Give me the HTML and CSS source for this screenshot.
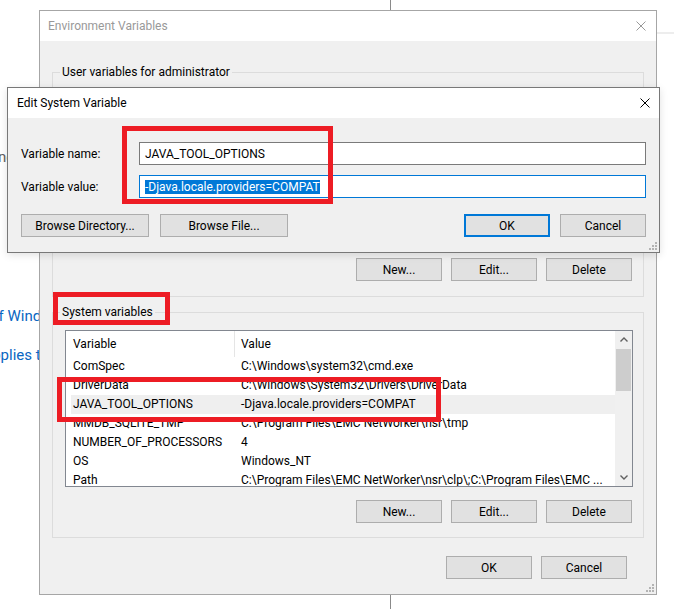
FILE: index.html
```html
<!DOCTYPE html>
<html lang="en">

<head>
    <meta charset="UTF-8">
    <meta name="viewport" content="width=device-width, initial-scale=1.0">
    <title>Environment Variables</title>
    <link rel="stylesheet" href="styles.css">
</head>

<body>

    <div class="desktop">
        <!-- settings page behind the dialogs -->
        <div class="bg-line"></div>
        <div class="bg-rule"></div>
        <span class="bg-text sync">nc</span>
        <span class="bg-text link first">of Windows</span>
        <span class="bg-text link second">applies to</span>

        <div class="window env">
            <div class="titlebar inactive">
                <span>Environment Variables</span>
                <svg class="close" viewBox="0 0 10 10"><path d="M0.5 0.5L9.5 9.5M9.5 0.5L0.5 9.5" /></svg>
            </div>
            <div class="env-body">
                <fieldset class="group user">
                    <legend>User variables for administrator</legend>
                    <div class="listview short">
                        <div class="lv-main">
                            <div class="lv-head">
                                <span>Variable</span>
                                <span class="col-value">Value</span>
                            </div>
                            <div class="lv-row"><span>OneDrive</span><span class="col-value">C:\Users\administrator\OneDrive</span></div>
                            <div class="lv-row"><span>Path</span><span class="col-value">C:\Users\administrator\AppData\Local\Microsoft\WindowsApps;</span></div>
                            <div class="lv-row"><span>TEMP</span><span class="col-value">C:\Users\administrator\AppData\Local\Temp</span></div>
                            <div class="lv-row"><span>TMP</span><span class="col-value">C:\Users\administrator\AppData\Local\Temp</span></div>
                        </div>
                    </div>
                    <div class="btn-row">
                        <button class="btn">New...</button>
                        <button class="btn">Edit...</button>
                        <button class="btn">Delete</button>
                    </div>
                </fieldset>

                <fieldset class="group system">
                    <legend>System variables</legend>
                    <div class="listview">
                        <div class="lv-main">
                            <div class="lv-head">
                                <span>Variable</span>
                                <span class="col-value">Value</span>
                            </div>
                            <div class="lv-row"><span>ComSpec</span><span class="col-value">C:\Windows\system32\cmd.exe</span></div>
                            <div class="lv-row"><span>DriverData</span><span class="col-value">C:\Windows\System32\Drivers\DriverData</span></div>
                            <div class="lv-row selected"><span>JAVA_TOOL_OPTIONS</span><span class="col-value">-Djava.locale.providers=COMPAT</span></div>
                            <div class="lv-row"><span>MMDB_SQLITE_TMP</span><span class="col-value">C:\Program Files\EMC NetWorker\nsr\tmp</span></div>
                            <div class="lv-row"><span>NUMBER_OF_PROCESSORS</span><span class="col-value">4</span></div>
                            <div class="lv-row"><span>OS</span><span class="col-value">Windows_NT</span></div>
                            <div class="lv-row"><span>Path</span><span class="col-value">C:\Program Files\EMC NetWorker\nsr\clp\;C:\Program Files\EMC ...</span></div>
                        </div>
                        <div class="scrollbar">
                            <div class="sb-btn"><svg viewBox="0 0 8 5"><polyline points="0.5,4.5 4,1 7.5,4.5" /></svg></div>
                            <div class="sb-track"><div class="sb-thumb"></div></div>
                            <div class="sb-btn"><svg viewBox="0 0 8 5"><polyline points="0.5,0.5 4,4 7.5,0.5" /></svg></div>
                        </div>
                    </div>
                    <div class="btn-row">
                        <button class="btn">New...</button>
                        <button class="btn">Edit...</button>
                        <button class="btn">Delete</button>
                    </div>
                </fieldset>

                <div class="footer">
                    <button class="btn">OK</button>
                    <button class="btn">Cancel</button>
                </div>
            </div>
            <svg class="grip" viewBox="0 0 8 8"><path d="M6 0h2v2H6zM3 3h2v2H3zM6 3h2v2H6zM0 6h2v2H0zM3 6h2v2H3zM6 6h2v2H6z" /></svg>
        </div>

        <div class="window edit">
            <div class="titlebar">
                <span>Edit System Variable</span>
                <svg class="close" viewBox="0 0 10 10"><path d="M0.5 0.5L9.5 9.5M9.5 0.5L0.5 9.5" /></svg>
            </div>
            <div class="edit-body">
                <div class="fields">
                    <label for="var-name">Variable name:</label>
                    <div class="field" id="var-name">JAVA_TOOL_OPTIONS</div>
                    <label for="var-value">Variable value:</label>
                    <div class="field focus" id="var-value"><span class="sel">-Djava.locale.providers=COMPAT</span></div>
                </div>
                <div class="edit-actions">
                    <button class="btn wide">Browse Directory...</button>
                    <button class="btn wide">Browse File...</button>
                    <span class="spacer"></span>
                    <button class="btn default">OK</button>
                    <button class="btn">Cancel</button>
                </div>
            </div>
            <svg class="grip" viewBox="0 0 8 8"><path d="M6 0h2v2H6zM3 3h2v2H3zM6 3h2v2H6zM0 6h2v2H0zM3 6h2v2H3zM6 6h2v2H6z" /></svg>
        </div>

        <!-- red annotation boxes -->
        <div class="mark mark-fields"></div>
        <div class="mark mark-label"></div>
        <div class="mark mark-row"></div>
    </div>

</body>

</html>
```

FILE: styles.css
```css
* {
    box-sizing: border-box;
}

body {
    margin: 0;
    font-family: "Segoe UI", Roboto, sans-serif;
    font-size: 12px;
    color: #000;
    background: #fff;
}

.desktop {
    position: relative;
    width: 674px;
    height: 609px;
    overflow: hidden;
}

/* things on the settings page behind */
.bg-line {
    position: absolute;
    left: 390px;
    top: 0;
    width: 1px;
    height: 609px;
    background: #8a8a8a;
}

.bg-rule {
    position: absolute;
    left: 656px;
    top: 32px;
    width: 18px;
    height: 2px;
    background: #ededed;
}

.bg-text {
    position: absolute;
    font-size: 15px;
    line-height: 20px;
    white-space: nowrap;
}

.sync {
    left: -2px;
    top: 147px;
    color: #606060;
}

.link {
    color: #0a66c2;
}

.link.first {
    left: -10px;
    top: 306px;
}

.link.second {
    left: -16px;
    top: 345px;
}

/* windows */
.window {
    position: absolute;
    display: flex;
    flex-direction: column;
    background: #f0f0f0;
}

.env {
    left: 39px;
    top: 10px;
    width: 618px;
    height: 585px;
    border: 1px solid #a6a6a6;
}

.edit {
    left: 7px;
    top: 87px;
    width: 653px;
    height: 166px;
    border: 1px solid #787878;
    box-shadow: 0 2px 8px rgba(0, 0, 0, 0.12);
}

.titlebar {
    flex: none;
    height: 30px;
    background: #fff;
    display: flex;
    align-items: center;
    justify-content: space-between;
    padding: 0 10px 0 8px;
}

.titlebar.inactive {
    color: #999;
}

.edit .titlebar {
    padding: 0 9px;
}

.close {
    width: 10px;
    height: 10px;
    fill: none;
    stroke: currentColor;
    stroke-width: 1;
}

.grip {
    position: absolute;
    right: 2px;
    bottom: 2px;
    width: 8px;
    height: 8px;
    fill: #b3b3b3;
}

/* environment variables dialog */
.env-body {
    flex: 1;
    padding: 23px 12px 0;
}

.group {
    margin: 0;
    padding: 0 0 14px;
    border: 1px solid #dcdcdc;
}

.group.user {
    padding-bottom: 15px;
}

.group.system {
    margin-top: 7px;
}

legend {
    margin-left: 7px;
    padding: 0 2px;
    line-height: 16px;
}

.listview {
    display: flex;
    height: 157px;
    margin: 10px 10px 0 12px;
    border: 1px solid #828790;
    background: #fff;
    overflow: hidden;
}

.listview.short {
    height: 155px;
}

.lv-main {
    flex: 1;
    min-width: 0;
    overflow: hidden;
}

.lv-head,
.lv-row {
    display: grid;
    grid-template-columns: 163px 1fr;
    margin-left: 5px;
    white-space: nowrap;
}

.lv-head {
    height: 26px;
}

.lv-head span {
    display: flex;
    align-items: center;
    padding-left: 2px;
}

.lv-head .col-value {
    border-left: 1px solid #e5e5e5;
    padding-left: 6px;
}

.lv-row {
    height: 19px;
    line-height: 19px;
}

.lv-row span {
    padding-left: 2px;
    overflow: hidden;
}

.lv-row .col-value {
    padding-left: 7px;
}

.lv-row.selected {
    background: #efefef;
}

.scrollbar {
    flex: none;
    width: 17px;
    display: flex;
    flex-direction: column;
    background: #f0f0f0;
}

.sb-btn {
    height: 17px;
    display: flex;
    align-items: center;
    justify-content: center;
}

.sb-btn svg {
    width: 8px;
    height: 5px;
    fill: none;
    stroke: #606060;
    stroke-width: 1.4;
}

.sb-track {
    flex: 1;
}

.sb-thumb {
    height: 42px;
    margin: 1px 1px 0;
    background: #cdcdcd;
}

.btn-row {
    display: flex;
    justify-content: flex-end;
    gap: 9px;
    margin: 13px 11px 0 0;
}

.btn {
    width: 86px;
    height: 23px;
    padding: 0;
    font: inherit;
    color: #000;
    background: #e1e1e1;
    border: 1px solid #adadad;
}

.footer {
    display: flex;
    justify-content: flex-end;
    gap: 9px;
    margin-top: 18px;
    padding-right: 17px;
}

/* edit system variable dialog */
.edit-body {
    flex: 1;
    padding: 24px 13px 0;
}

.fields {
    display: grid;
    grid-template-columns: 118px 1fr;
    row-gap: 10px;
    align-items: center;
}

.field {
    height: 23px;
    padding: 0 5px;
    display: flex;
    align-items: center;
    white-space: nowrap;
    background: #fff;
    border: 1px solid #7a7a7a;
}

.field.focus {
    border-color: #0078d7;
}

.sel {
    background: #0078d7;
    color: #fff;
    line-height: 14px;
}

.edit-actions {
    display: flex;
    gap: 10px;
    margin-top: 16px;
}

.edit-actions .wide {
    width: 128px;
}

.edit-actions .wide + .wide {
    margin-left: 1px;
}

.spacer {
    flex: 1;
}

.btn.default {
    border: 2px solid #0078d7;
}

/* red annotation rectangles */
.mark {
    position: absolute;
    border: 5px solid #ed1c24;
}

.mark-fields {
    left: 122px;
    top: 126px;
    width: 211px;
    height: 78px;
}

.mark-label {
    left: 53px;
    top: 292px;
    width: 117px;
    height: 33px;
}

.mark-row {
    left: 57px;
    top: 377px;
    width: 384px;
    height: 45px;
}
```
